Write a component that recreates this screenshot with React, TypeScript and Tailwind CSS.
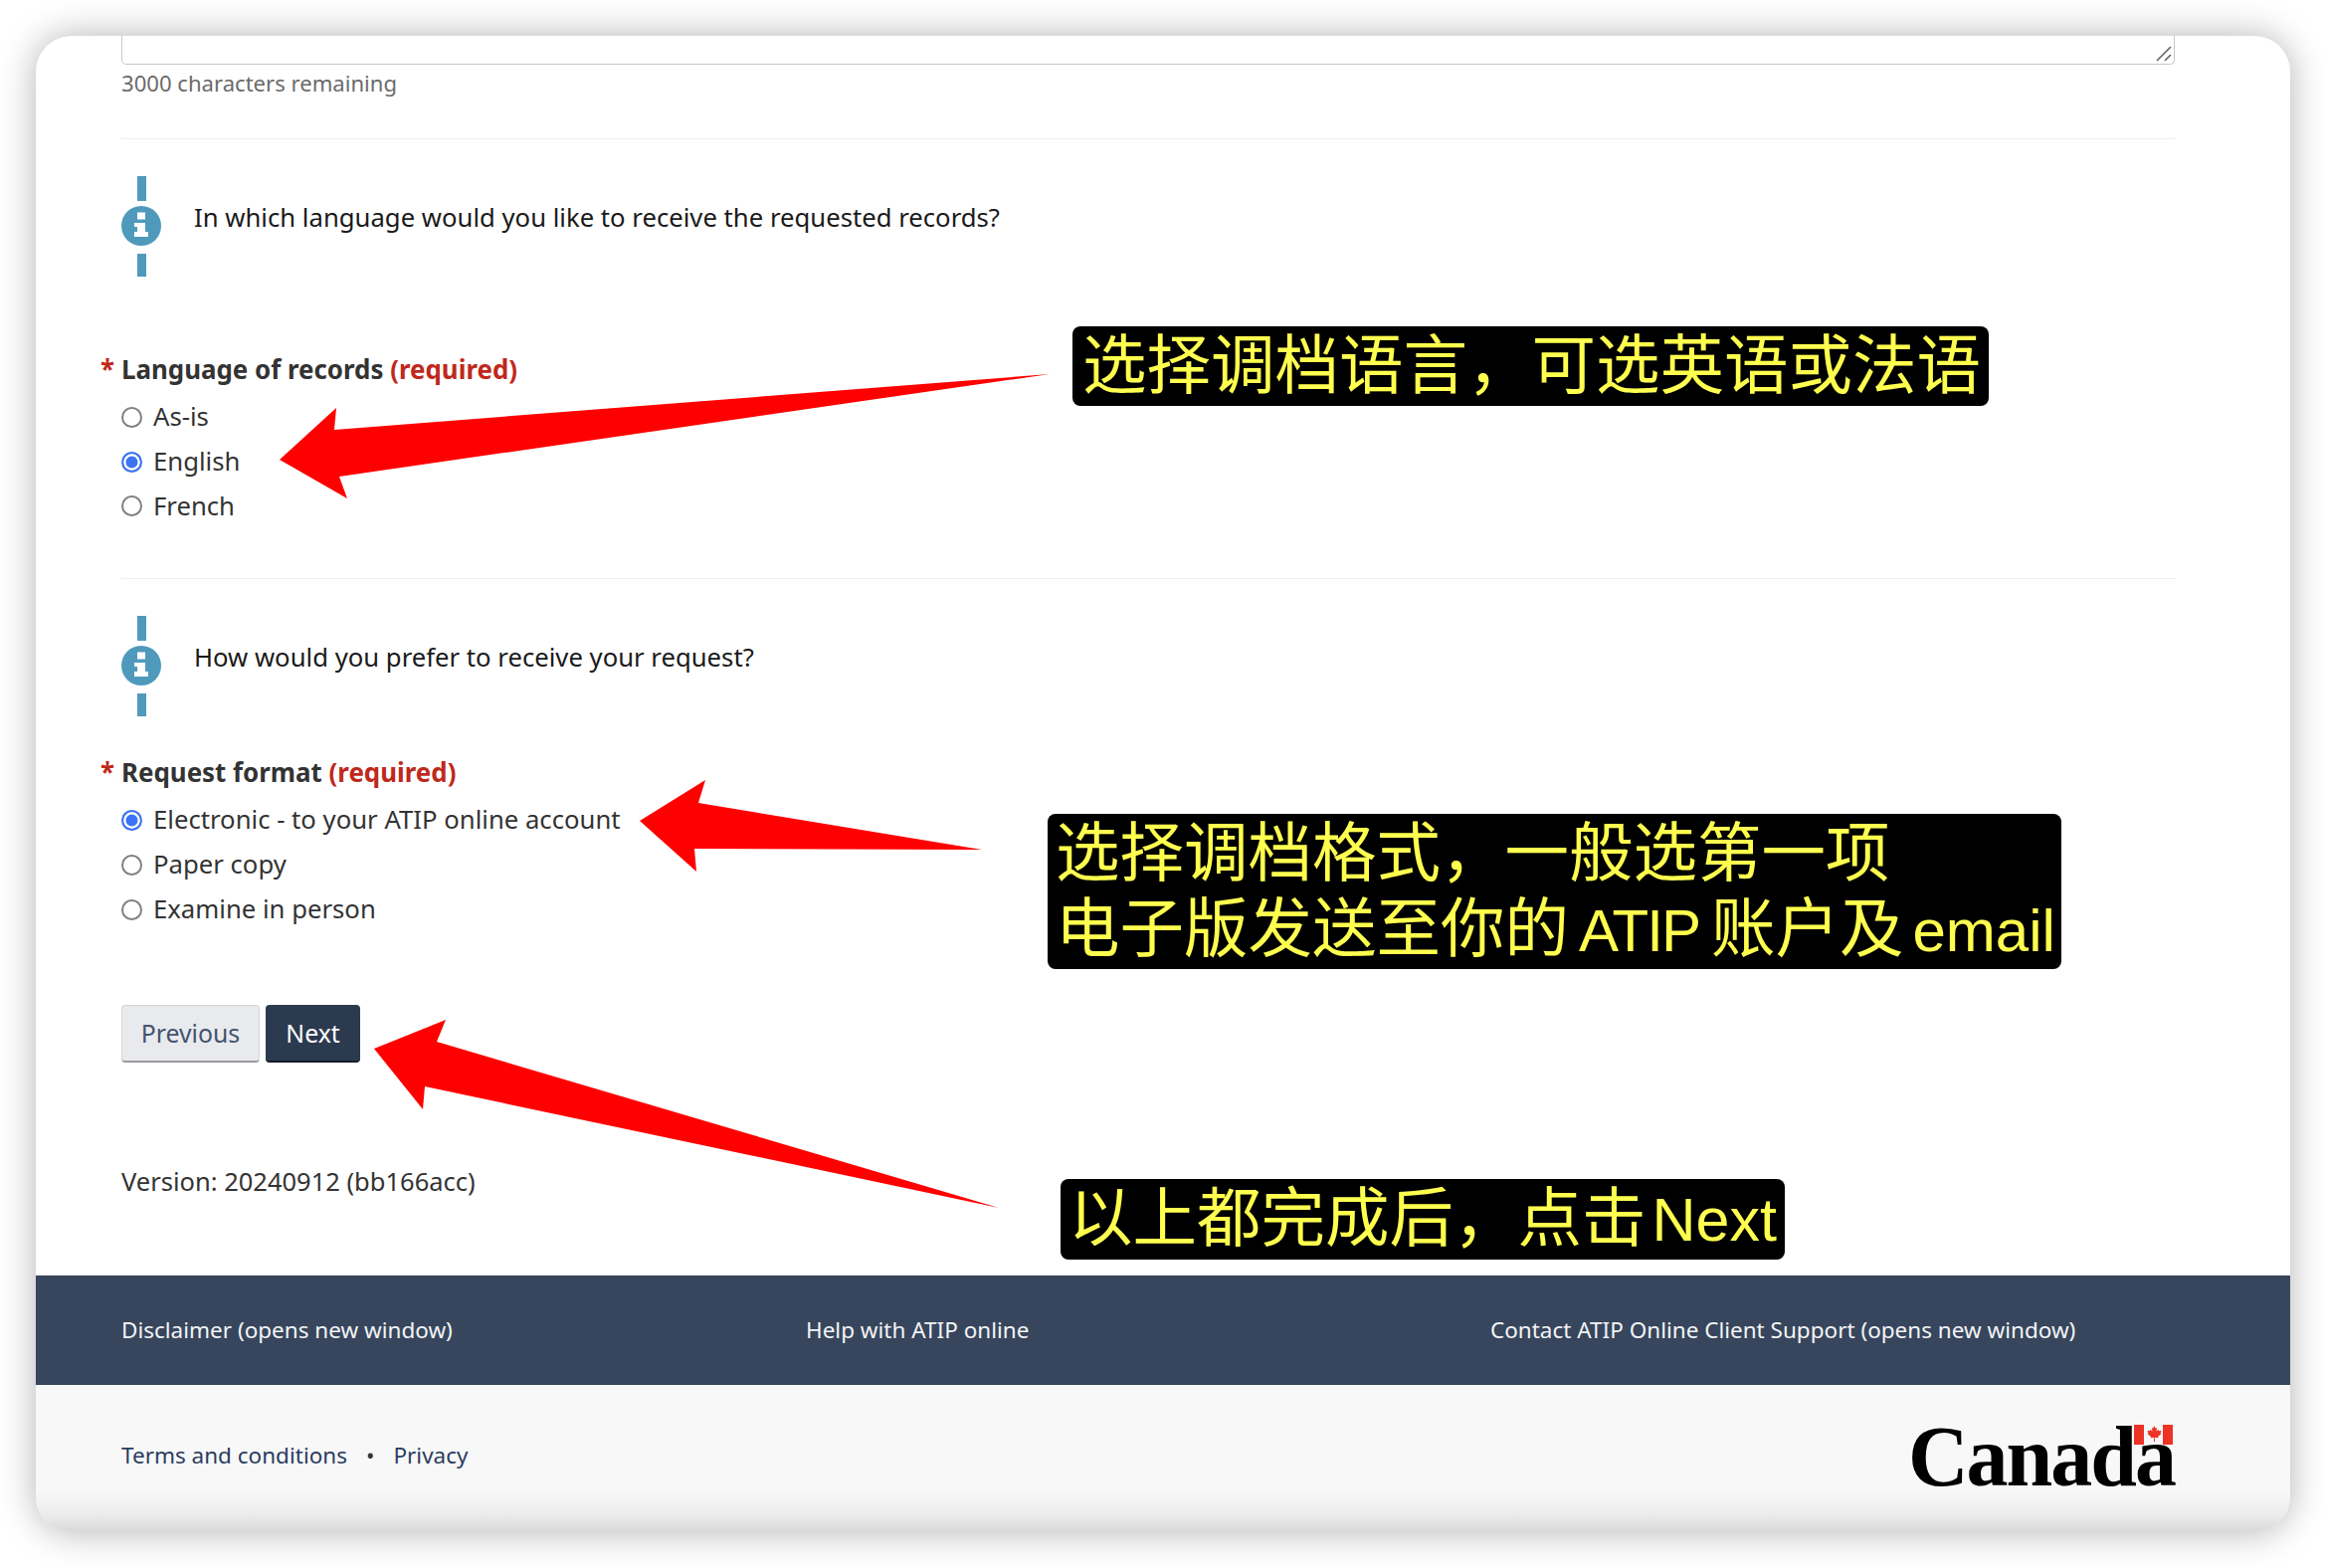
const sans = { fontFamily: '"Noto Sans", sans-serif' };

function InfoRow({ text }: { text: string }) {
  return (
    <div className="flex gap-[33px]">
      <div className="flex h-[101px] w-[40px] flex-col items-center">
        <div className="h-[25px] w-[9px] bg-[#4f9abc]" />
        <svg className="mt-[5px]" width="40" height="40" viewBox="0 0 40 40">
          <circle cx="20" cy="20" r="20" fill="#4f9abc" />
          <path d="M16 6.500h8v7h-8zM13 17h11v9h3v5H13v-5h3v-5h-3z" fill="#fff" />
        </svg>
        <div className="mt-[8px] h-[23px] w-[9px] bg-[#4f9abc]" />
      </div>
      <div className="mt-[25px] text-[25.7px] leading-[34px] text-[#1a1a1a]">{text}</div>
    </div>
  );
}

function RadioGroup(props: { name: string; label: string; options: string[]; checked: number; gap: string }) {
  return (
    <div>
      <div className="relative h-[30px] text-[25.9px] leading-[30px] font-bold text-[#333]">
        <span className="absolute left-[-21px] top-0 text-[#c0281c]">*</span>
        {props.label} <span className="text-[#c0281c]">(required)</span>
      </div>
      <div className={props.gap}>
        {props.options.map((o, i) => (
          <label key={o} className="flex h-[44.75px] items-center gap-[11px] text-[25.7px] text-[#333]">
            <input
              type="radio"
              name={props.name}
              defaultChecked={i === props.checked}
              className="m-0 h-[21px] w-[21px] appearance-none rounded-full border-2 border-[#808080] bg-white checked:border-[#3b73f5] checked:bg-[#3b73f5] checked:shadow-[inset_0_0_0_2.5px_#fff]"
            />
            {o}
          </label>
        ))}
      </div>
    </div>
  );
}

function MapleLeaf() {
  return (
    <svg width="16" height="20" viewBox="0 0 16 20" className="block">
      <path
        d="M8 1l1.600 2.600 1.500-.7-.6 3.800 2-2 .6 1.500 2.400-.4-.9 2.600 1 .6-3.600 3 .4 1.300-3.500-.5.2 4.200h-1.200l.2-4.200-3.500.5.4-1.300-3.600-3 1-.6-.9-2.600 2.400.4.6-1.500 2 2-.6-3.800 1.500.7z"
        fill="#ec3325"
      />
    </svg>
  );
}

function Label(props: { className: string; children: React.ReactNode }) {
  return (
    <div
      className={"absolute rounded-[8px] bg-black text-[64.5px] leading-[76px] whitespace-nowrap text-[#ffff4f] " + props.className}
      style={{ fontFamily: '"Liberation Sans", "Noto Sans CJK SC", sans-serif' }}
    >
      {props.children}
    </div>
  );
}

export default function App() {
  return (
    <div className="relative h-[1576px] w-[2338px] overflow-hidden bg-white p-[36px]" style={sans}>
      <div className="flex h-[1504px] flex-col overflow-hidden rounded-[36px] bg-white shadow-[0_0_36px_rgba(0,0,0,0.3)]">
        <div className="flex-1 pr-[116px] pl-[86px]">
          <div className="relative h-[29px] rounded-b-[5px] border-x border-b border-[#c8c8c8]">
            <svg className="absolute right-[2px] bottom-[2px]" width="16" height="16" viewBox="0 0 16 16">
              <path d="M1 15L15 1M9 15l6-6" stroke="#666" strokeWidth="1.6" />
            </svg>
          </div>
          <div className="mt-[6px] text-[22.1px] leading-[24px] text-[#6b6b6b]">3000 characters remaining</div>
          <div className="mt-[44px] border-t border-[#eeeeee]" />

          <div className="mt-[37px]">
            <InfoRow text="In which language would you like to receive the requested records?" />
          </div>
          <div className="mt-[78px]">
            <RadioGroup name="lang" label="Language of records" options={["As-is", "English", "French"]} checked={1} gap="mt-[11px]" />
          </div>

          <div className="mt-[50px] border-t border-[#eeeeee]" />

          <div className="mt-[37px]">
            <InfoRow text="How would you prefer to receive your request?" />
          </div>
          <div className="mt-[41px]">
            <RadioGroup
              name="format"
              label="Request format"
              options={["Electronic - to your ATIP online account", "Paper copy", "Examine in person"]}
              checked={0}
              gap="mt-[11px]"
            />
          </div>

          <div className="mt-[73px] flex gap-[6px]">
            <button className="h-[58px] w-[139px] rounded-[4px] border border-b-2 border-[#d5d6da] border-b-[#9a9a9f] bg-[#e9eaed] pt-[2px] text-[24.8px] text-[#42536f]">
              Previous
            </button>
            <button className="h-[58px] w-[95px] rounded-[4px] border-b-2 border-b-[#141c28] bg-[#2c3a4f] pt-[2px] text-[24.8px] text-white">
              Next
            </button>
          </div>

          <div className="mt-[104px] text-[25.5px] leading-[30px] text-[#333]">Version: 20240912 (bb166acc)</div>
        </div>

        <div className="h-[110px] bg-[#37465c] pr-[116px] pl-[86px]">
          <div className="grid h-full grid-cols-3 items-center text-[22.5px] text-[#f2f4f7]">
            <span>Disclaimer (opens new window)</span>
            <span>Help with ATIP online</span>
            <span>Contact ATIP Online Client Support (opens new window)</span>
          </div>
        </div>

        <div className="flex h-[148px] items-start justify-between bg-[linear-gradient(to_bottom,#f8f8f8_72%,#ececec_88%,#d9d9d9_100%)] pr-[116px] pl-[86px]">
          <div className="mt-[55px] flex items-center text-[22.5px] leading-[32px] text-[#2b3d5f]">
            <span>Terms and conditions</span>
            <span className="mx-[19px] text-[#333]">•</span>
            <span>Privacy</span>
          </div>
          <div className="relative mt-[28px] h-[80px] w-[268px]">
            <span
              className="absolute right-0 bottom-[-5px] origin-bottom scale-y-[1.04] text-[84px] leading-[80px] font-bold tracking-[-2px] text-black"
              style={{ fontFamily: '"Liberation Serif", serif' }}
            >
              Canada
            </span>
            <div className="absolute top-[12px] right-[2px] flex h-[20px] w-[39px] justify-between">
              <div className="w-[10px] bg-[#ec3325]" />
              <div className="flex-1 bg-[#f8f8f8]">
                <div className="flex justify-center"><MapleLeaf /></div>
              </div>
              <div className="w-[10px] bg-[#ec3325]" />
            </div>
          </div>
        </div>
      </div>

      {/* annotations on top of the screenshot */}
      <svg className="absolute inset-0" width="2338" height="1576" viewBox="0 0 2338 1576">
        <polygon points="281,462 338,410 336,432 1055,376 341,479 349,501" fill="#ff0000" />
        <polygon points="643,825 709,784 702,807 987,854 698,853 700,876" fill="#ff0000" />
        <polygon points="376,1054 448,1025 439,1047 1004,1214 427,1092 425,1115" fill="#ff0000" />
      </svg>
      <Label className="top-[328px] left-[1078px] h-[80px] w-[921px] pt-[2px] pl-[10px]">选择调档语言，可选英语或法语</Label>
      <Label className="top-[818px] left-[1053px] h-[156px] w-[1019px] pt-[2px] pl-[8px]">
        <div>选择调档格式，一般选第一项</div>
        <div>
          电子版发送至你的
          <span className="mx-[10px] text-[60px] tracking-[-2px]">ATIP</span>
          <span className="ml-[2px]">账户及</span>
          <span className="ml-[9px] text-[60px]">email</span>
        </div>
      </Label>
      <Label className="top-[1185px] left-[1066px] h-[81px] w-[728px] pt-[2px] pl-[8px]">
        以上都完成后，点击
        <span className="ml-[6px] text-[61px]">Next</span>
      </Label>
    </div>
  );
}
